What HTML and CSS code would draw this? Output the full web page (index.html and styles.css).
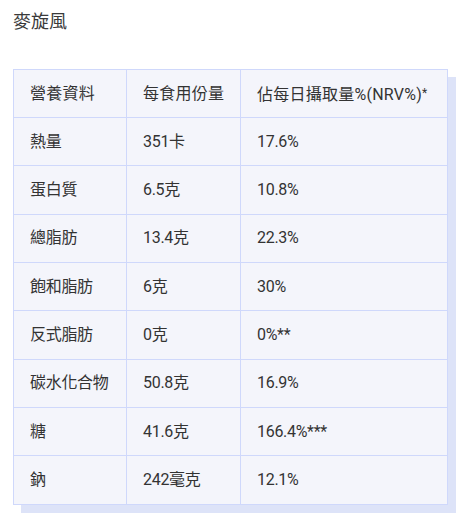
FILE: index.html
```html
<!DOCTYPE html>
<html lang="zh-Hant">
<head>
<meta charset="utf-8">
<title>麥旋風</title>
<link rel="stylesheet" href="styles.css">
</head>
<body>
<div class="page">
  <h2 class="title">麥旋風</h2>
  <table class="nutrition">
    <colgroup>
      <col class="col-name">
      <col class="col-serving">
      <col class="col-nrv">
    </colgroup>
    <thead>
      <tr><th>營養資料</th><th>每食用份量</th><th>佔每日攝取量%(NRV%)<span class="mark">*</span></th></tr>
    </thead>
    <tbody>
      <tr><td>熱量</td><td>351卡</td><td>17.6%</td></tr>
      <tr><td>蛋白質</td><td>6.5克</td><td>10.8%</td></tr>
      <tr><td>總脂肪</td><td>13.4克</td><td>22.3%</td></tr>
      <tr><td>飽和脂肪</td><td>6克</td><td>30%</td></tr>
      <tr><td>反式脂肪</td><td>0克</td><td>0%**</td></tr>
      <tr><td>碳水化合物</td><td>50.8克</td><td>16.9%</td></tr>
      <tr><td>糖</td><td>41.6克</td><td>166.4%***</td></tr>
      <tr><td>鈉</td><td>242毫克</td><td>12.1%</td></tr>
    </tbody>
  </table>
</div>
</body>
</html>
```
FILE: styles.css
```css
html, body {
  margin: 0;
  padding: 0;
  background: #ffffff;
}
.page {
  padding: 8px 13px;
  font-family: "Roboto", "Noto Sans CJK TC", sans-serif;
  color: #333333;
}
.title {
  margin: 0 0 37px 0;
  font-family: "Noto Sans CJK TC", sans-serif;
  font-size: 18px;
  font-weight: 400;
  line-height: 24px;
  color: #3a3a3a;
}
.nutrition {
  border-collapse: collapse;
  table-layout: fixed;
  width: 434px;
  background: #f4f5fb;
  box-shadow: 8px 8px 0 #dde3f8;
  font-size: 16px;
}
.col-name { width: 113px; }
.col-serving { width: 114px; }
.col-nrv { width: 207px; }
.nutrition th,
.nutrition td {
  border: 1px solid #cfd8fb;
  padding: 0 0 0 16px;
  text-align: left;
  font-weight: 400;
  line-height: 20px;
  white-space: nowrap;
}
.nutrition th {
  height: 47px;
  letter-spacing: 0.25px;
}
.nutrition td {
  height: 47.33px;
  letter-spacing: -0.3px;
}
.mark {
  font-size: 12px;
  vertical-align: 3px;
}
```
